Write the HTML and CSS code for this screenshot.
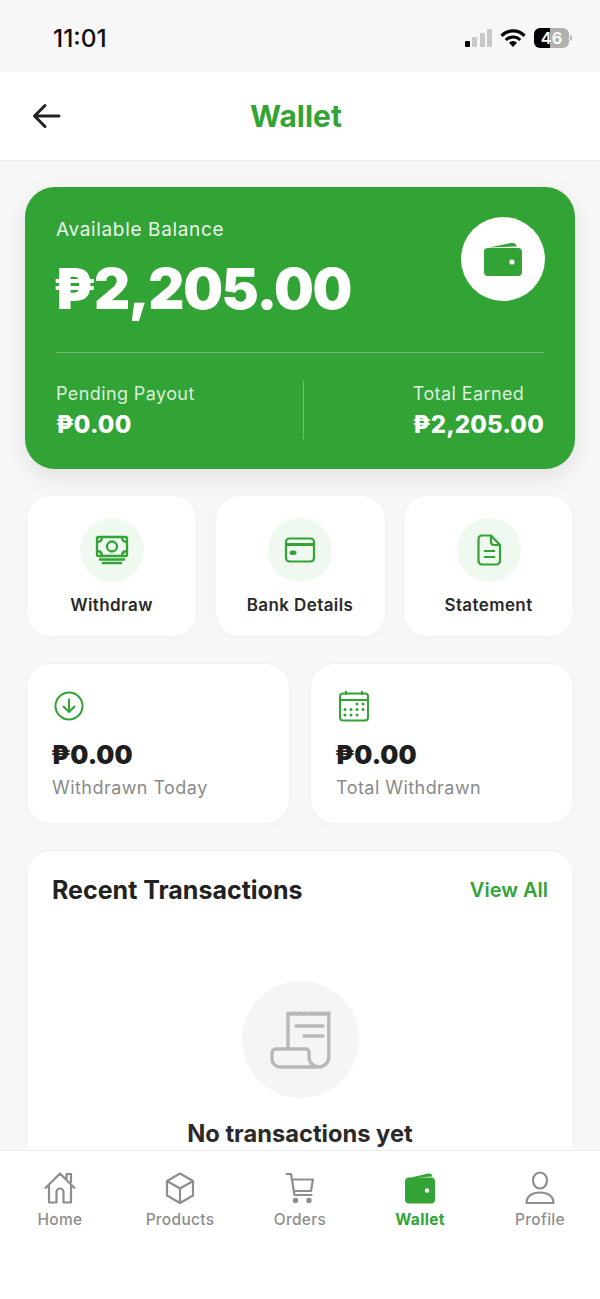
FILE: index.html
```html
<!DOCTYPE html>
<html lang="en">
<head>
<meta charset="utf-8">
<title>Wallet</title>
<link rel="stylesheet" href="styles.css">
</head>
<body>
<div class="app">
  <div class="status">
    <span class="time">11:01</span>
    <div class="status-icons">
      <div class="signal"><i class="on b1"></i><i class="b2"></i><i class="b3"></i><i class="b4"></i></div>
      <svg class="wifi" width="26" height="18" viewBox="0 0 26 18"><path d="M1.500 6.800a16 16 0 0 1 23 0M5.800 11a10.300 10.300 0 0 1 14.400 0" fill="none" stroke="#000" stroke-width="3.100"/><path d="M13 18l-4-4.300a5.800 5.800 0 0 1 8 0z" fill="#000"/></svg>
      <div class="battery">46</div>
      <i class="nub"></i>
    </div>
  </div>

  <header class="topbar">
    <svg class="back" width="30" height="28" viewBox="0 0 30 28"><path d="M27 14H2.500M13 3.500L2.500 14 13 24.500" fill="none" stroke="#222" stroke-width="3" stroke-linecap="round" stroke-linejoin="round"/></svg>
    <h1 class="title">Wallet</h1>
  </header>

  <main class="content">
    <section class="balance">
      <div class="balance-top">
        <div>
          <div class="balance-label">Available Balance</div>
          <div class="balance-amount">₱2,205.00</div>
        </div>
        <div class="balance-badge">
          <svg width="40" height="36" viewBox="0 0 40 36"><path d="M6 6.500L28 2c3-.5 5 .5 6 3.500zM5 7h30a4 4 0 0 1 4 4v20a4 4 0 0 1-4 4H5a4 4 0 0 1-4-4V11a4 4 0 0 1 4-4z" fill="#32a436"/><circle cx="29" cy="21" r="2.600" fill="#fff"/></svg>
        </div>
      </div>
      <div class="rule"></div>
      <div class="balance-bottom">
        <div>
          <div class="sub-label">Pending Payout</div>
          <div class="sub-value">₱0.00</div>
        </div>
        <div class="vrule"></div>
        <div>
          <div class="sub-label">Total Earned</div>
          <div class="sub-value">₱2,205.00</div>
        </div>
      </div>
    </section>

    <section class="actions">
      <div class="card action">
        <div class="action-icon">
          <svg width="34" height="30" viewBox="0 0 34 30" fill="none" stroke="#32a436" stroke-width="2.300"><rect x="2" y="2" width="30" height="19" rx="1.500"/><circle cx="17" cy="11.500" r="5"/><path d="M2 7c3 0 5-2 5-5M32 7c-3 0-5-2-5-5M2 16c3 0 5 2 5 5M32 16c-3 0-5 2-5 5M4 24.500h26M7 28h20"/></svg>
        </div>
        <div class="action-label">Withdraw</div>
      </div>
      <div class="card action">
        <div class="action-icon">
          <svg width="32" height="26" viewBox="0 0 32 26" fill="none" stroke="#32a436" stroke-width="2.200"><rect x="2" y="1.500" width="28" height="23" rx="3.500"/><path d="M2 7.500h28" stroke-width="3"/><rect x="6" y="14" width="6" height="3.500" rx="1.500" fill="#32a436" stroke-width="1"/></svg>
        </div>
        <div class="action-label">Bank Details</div>
      </div>
      <div class="card action">
        <div class="action-icon">
          <svg width="26" height="32" viewBox="0 0 26 32" fill="none" stroke="#32a436" stroke-width="2.200" stroke-linejoin="round"><path d="M6 1.500h9l9 9.500v16a3.500 3.500 0 0 1-3.500 3.500H6A3.500 3.500 0 0 1 2.500 27V5A3.500 3.500 0 0 1 6 1.500z"/><path d="M15 1.500V8a3 3 0 0 0 3 3h6M8 17h11M8 23h11"/></svg>
        </div>
        <div class="action-label">Statement</div>
      </div>
    </section>

    <section class="stats">
      <div class="card stat">
        <div class="stat-icon">
          <svg width="30" height="30" viewBox="0 0 30 30" fill="none" stroke="#32a436" stroke-width="2" stroke-linecap="round" stroke-linejoin="round"><circle cx="15" cy="15" r="13.500"/><path d="M15 8.500v12.500M9.500 15.500L15 21l5.500-5.500"/></svg>
        </div>
        <div class="stat-value">₱0.00</div>
        <div class="stat-label">Withdrawn Today</div>
      </div>
      <div class="card stat">
        <div class="stat-icon">
          <svg width="32" height="32" viewBox="0 0 32 32" fill="none" stroke="#32a436" stroke-width="2"><rect x="2" y="3.500" width="28" height="27" rx="3"/><path d="M2 10h28M8 1v4M24 1v4"/><g fill="#32a436" stroke="none"><circle cx="19" cy="14" r="1.500"/><circle cx="25" cy="14" r="1.500"/><circle cx="7" cy="19.500" r="1.500"/><circle cx="13" cy="19.500" r="1.500"/><circle cx="19" cy="19.500" r="1.500"/><circle cx="25" cy="19.500" r="1.500"/><circle cx="7" cy="25" r="1.500"/><circle cx="13" cy="25" r="1.500"/><circle cx="19" cy="25" r="1.500"/></g></svg>
        </div>
        <div class="stat-value">₱0.00</div>
        <div class="stat-label">Total Withdrawn</div>
      </div>
    </section>

    <section class="card transactions">
      <div class="tx-head">
        <h2 class="tx-title">Recent Transactions</h2>
        <span class="tx-link">View All</span>
      </div>
      <div class="empty">
        <div class="empty-icon">
          <svg width="62" height="60" viewBox="0 0 62 60" fill="none" stroke="#b8b8b8" stroke-width="3.400" stroke-linejoin="round"><path d="M19 39V3q1.700 2.500 3.400 0q1.700 2.500 3.400 0q1.700 2.500 3.400 0q1.700 2.500 3.400 0q1.700 2.500 3.400 0q1.700 2.500 3.400 0q1.700 2.500 3.400 0q1.700 2.500 3.400 0q1.700 2.500 3.400 0q1.700 2.500 3.400 0q1.700 2.500 3.400 0q1.700 2.500 3.400 0V47a10 10 0 0 1-10 10H11a8 8 0 0 1-8-8v-6a4 4 0 0 1 4-4h30a3 3 0 0 1 3 3v5a10 10 0 0 0 10 10"/><path d="M27 16h27M35 26h19" stroke-linecap="round"/></svg>
        </div>
        <div class="empty-title">No transactions yet</div>
      </div>
    </section>
  </main>

  <nav class="tabs">
    <div class="tab">
      <svg width="34" height="34" viewBox="0 0 34 34" fill="none" stroke="#8e8e8e" stroke-width="2.200" stroke-linejoin="round"><path d="M2 17.500L17 2.500l15 15M6 14v17.500h7.500V21a3.500 3.500 0 0 1 7 0v10.500H28V14M23.500 8V3h4.500v9"/></svg>
      <span class="tab-label">Home</span>
    </div>
    <div class="tab">
      <svg width="34" height="34" viewBox="0 0 34 34" fill="none" stroke="#8e8e8e" stroke-width="2.200" stroke-linejoin="round"><path d="M17 2.500l13 7.500v14.500L17 32 4 24.500V10zM4 10l13 7.500L30 10M17 17.500V32"/></svg>
      <span class="tab-label">Products</span>
    </div>
    <div class="tab">
      <svg width="34" height="34" viewBox="0 0 34 34" fill="none" stroke="#8e8e8e" stroke-width="2.200" stroke-linejoin="round" stroke-linecap="round"><path d="M3.500 3H8l3.500 21h17M9 8.500h21L28 20H11"/><circle cx="12.500" cy="29.500" r="1.600" fill="#8e8e8e"/><circle cx="26" cy="29.500" r="1.600" fill="#8e8e8e"/></svg>
      <span class="tab-label">Orders</span>
    </div>
    <div class="tab active">
      <svg width="32" height="34" viewBox="0 0 32 34"><path d="M5 7L24 2.500c2.500-.5 4 .5 4.500 3zM5 6.500h22a4 4 0 0 1 4 4v18a4 4 0 0 1-4 4H5a4 4 0 0 1-4-4v-18a4 4 0 0 1 4-4z" fill="#32a436"/><circle cx="23" cy="19.500" r="2.200" fill="#fff"/></svg>
      <span class="tab-label">Wallet</span>
    </div>
    <div class="tab">
      <svg width="34" height="34" viewBox="0 0 34 34" fill="none" stroke="#8e8e8e" stroke-width="2.200"><ellipse cx="17" cy="9.500" rx="7" ry="8"/><path d="M3.500 32c0-7 6-10.500 13.500-10.500S30.500 25 30.500 32z" stroke-linejoin="round"/></svg>
      <span class="tab-label">Profile</span>
    </div>
  </nav>
</div>
</body>
</html>
```

FILE: styles.css
```css
* { box-sizing: border-box; }
html, body { margin: 0; padding: 0; }
body { font-family: Inter, "Liberation Sans", sans-serif; background: #f7f7f7; color: #222; }
.app { width: 600px; height: 1299px; display: flex; flex-direction: column; overflow: hidden; }

.status { height: 72px; flex: none; display: flex; align-items: center; justify-content: space-between; padding: 4px 28px 0 53px; background: #f7f7f7; }
.time { font-size: 24.500px; font-weight: 500; color: #111; }
.status-icons { display: flex; align-items: center; }
.signal { display: flex; align-items: flex-end; gap: 2.500px; height: 18px; margin-right: 8px; }
.signal i { width: 5px; background: #c8c8c8; border-radius: 1px; }
.signal .on { background: #000; }
.b1 { height: 6px; }
.b2 { height: 10px; }
.b3 { height: 14px; }
.b4 { height: 18px; }
.wifi { margin-right: 8px; }
.battery { width: 35px; height: 20px; border-radius: 6px; background: linear-gradient(90deg, #000 0 16px, #b0b0b0 16px); color: #fff; font-size: 16.500px; font-weight: 600; line-height: 20px; text-align: center; }
.nub { width: 2px; height: 6px; margin-left: 1px; border-radius: 0 2px 2px 0; background: #b8b8b8; }

.topbar { height: 89px; flex: none; position: relative; display: flex; align-items: center; justify-content: center; padding-right: 8px; background: #fff; border-bottom: 1px solid #ececec; }
.back { position: absolute; left: 32px; top: 30px; }
.title { margin: 0; font-size: 30px; font-weight: 700; color: #32a436; }

.content { flex: 1; min-height: 0; overflow: hidden; padding: 26px 25px 0; display: flex; flex-direction: column; gap: 26px; }

.balance { flex: none; height: 282px; padding: 30px 31px; border-radius: 30px; background: #32a436; color: #fff; box-shadow: 0 8px 22px rgba(0,0,0,.09); }
.balance-top { display: flex; justify-content: space-between; align-items: flex-start; height: 107px; margin-bottom: 28px; }
.balance-label { padding-top: 1px; font-size: 19px; line-height: 24px; letter-spacing: .65px; color: #eaf6eb; }
.balance-amount { margin: 12px 0 0 -3px; font-size: 56px; line-height: 70px; font-weight: 900; letter-spacing: -1.400px; }
.balance-badge { width: 84px; height: 84px; margin-right: -1px; border-radius: 50%; background: #fff; display: flex; align-items: center; justify-content: center; }
.rule { height: 1px; background: rgba(255,255,255,.3); }
.balance-bottom { margin-top: 28px; height: 58px; display: flex; justify-content: space-between; }
.vrule { width: 1px; background: rgba(255,255,255,.3); }
.sub-label { padding-top: 1px; font-size: 18px; line-height: 24px; letter-spacing: .4px; color: #dcefdd; }
.sub-value { margin-top: 4px; font-size: 24px; line-height: 30px; font-weight: 800; letter-spacing: .2px; }

.card { background: #fff; border: 1px solid #f2f2f2; border-radius: 24px; box-shadow: 0 2px 6px rgba(0,0,0,.015); }
.actions { flex: none; display: grid; grid-template-columns: repeat(3, 1fr); gap: 17.500px; padding: 0 1px; }
.action { height: 142px; padding-top: 22px; display: flex; flex-direction: column; align-items: center; }
.action-icon { width: 64px; height: 64px; border-radius: 50%; background: #eff9f0; display: flex; align-items: center; justify-content: center; }
.action-label { margin-top: 11px; font-size: 17px; line-height: 24px; font-weight: 600; letter-spacing: .4px; color: #2a2a2a; }

.stats { flex: none; display: grid; grid-template-columns: 1fr 1fr; gap: 20px; padding: 0 1px; }
.stat { height: 161px; padding: 25px 25px 0; }
.stat-icon { height: 34px; display: flex; align-items: center; padding-left: 2px; }
.stat-value { margin: 16px 0 0 -1px; font-size: 25.500px; line-height: 32px; font-weight: 900; color: #1e1e1e; }
.stat-label { margin-top: 5px; font-size: 18px; line-height: 24px; color: #8a8a8a; letter-spacing: .45px; }

.transactions { flex: none; margin: 0 1px; padding: 23px 25px 40px; }
.tx-head { display: flex; justify-content: space-between; align-items: center; height: 32px; }
.tx-title { margin: 0; font-size: 25px; font-weight: 700; color: #222; }
.tx-link { font-size: 20px; font-weight: 600; color: #32a436; }
.empty { margin-top: 75px; display: flex; flex-direction: column; align-items: center; }
.empty-icon { width: 117px; height: 117px; border-radius: 50%; background: #f5f5f5; display: flex; align-items: center; justify-content: center; }
.empty-title { margin-top: 21px; font-size: 23.700px; line-height: 30px; font-weight: 700; color: #2a2a2a; }

.tabs { height: 149px; flex: none; display: grid; grid-template-columns: repeat(5, 1fr); align-content: start; padding-top: 20px; background: #fff; border-top: 1px solid #ececec; }
.tab { display: flex; flex-direction: column; align-items: center; color: #8e8e8e; }
.tab-label { margin-top: 5px; font-size: 15.500px; line-height: 20px; font-weight: 500; letter-spacing: .3px; }
.tab.active { color: #32a436; }
.tab.active .tab-label { font-weight: 700; }
```
